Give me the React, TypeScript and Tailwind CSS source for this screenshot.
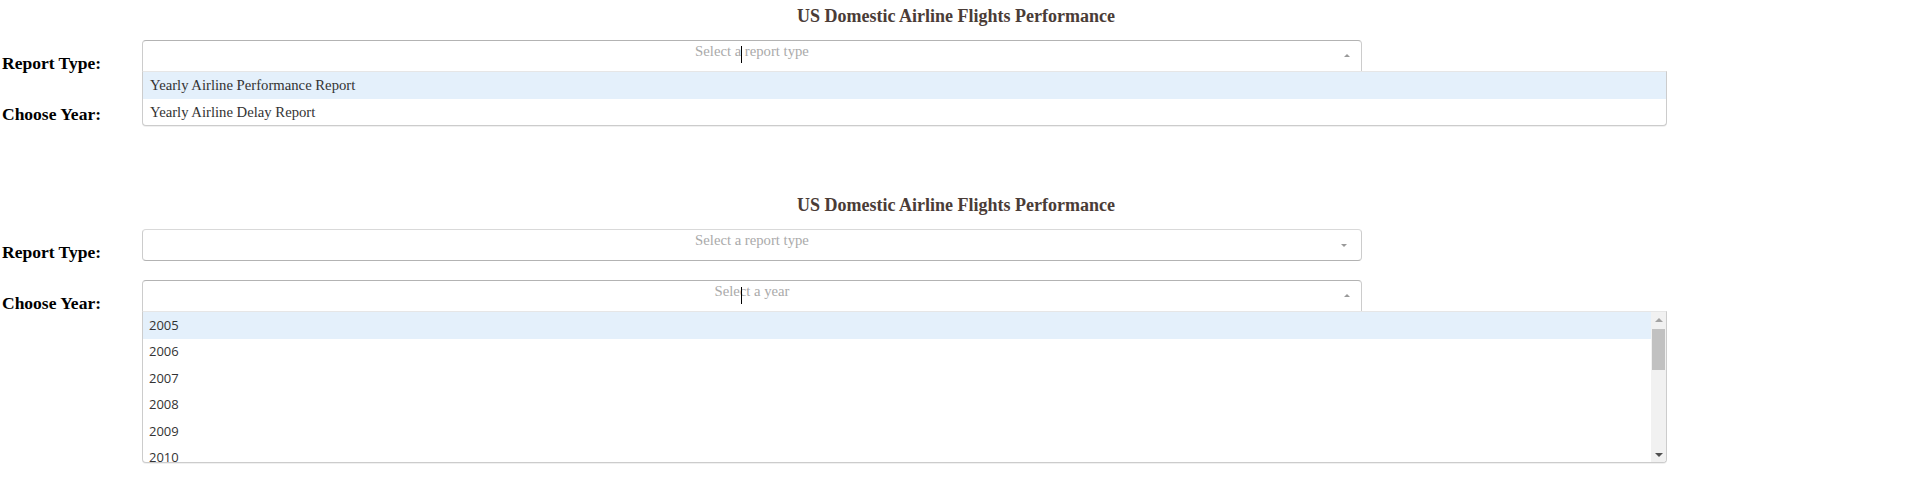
import React from 'react';

const reportTypes = ['Yearly Airline Performance Report', 'Yearly Airline Delay Report'];
const years = ['2005', '2006', '2007', '2008', '2009', '2010'];

function Caret({ up }: { up: boolean }) {
    return up ? (
        <span className="absolute right-[11px] top-[13px] border-x-[3px] border-x-transparent border-b-[3px] border-b-[#999]" />
    ) : (
        <span className="absolute right-[14px] top-[14px] border-x-[3px] border-x-transparent border-t-[3px] border-t-[#999]" />
    );
}

function Control({ placeholder, open, cursorTop }: { placeholder: string; open: boolean; cursorTop?: string }) {
    return (
        <div
            className={`relative h-[32px] w-[1220px] border bg-white ${
                open
                    ? 'rounded-t-[4px] border-[#ccc] border-t-[#b3b3b3] border-b-[#d9d9d9]'
                    : 'rounded-[4px] border-[#ccc] border-t-[#d9d9d9] border-b-[#b3b3b3]'
            }`}
        >
            <div className="pt-[1px] text-center text-[14.7px] leading-[18px] text-[#aaa]">{placeholder}</div>
            {open && <span className={`absolute left-[598px] ${cursorTop} h-[17px] w-px bg-black`} />}
            <Caret up={open} />
        </div>
    );
}

function Row({ label, children }: { label: string; children: React.ReactNode }) {
    return (
        <div className="flex h-[51px]">
            <div className="w-[142px] shrink-0 pl-[2px] pt-[13px] text-[17.5px] font-bold leading-[20px] text-black">{label}</div>
            <div className="relative">{children}</div>
        </div>
    );
}

function TypeMenu() {
    return (
        <div className="absolute left-0 top-[31px] z-10 w-[1525px] rounded-b-[4px] border border-[#ccc] border-t-[#e6e6e6] bg-white shadow-[0_1px_0_rgba(0,0,0,0.06)]">
            {reportTypes.map((t, i) => (
                <div
                    key={t}
                    className={`flex h-[26.5px] items-center pl-[7px] text-[14.7px] text-[#333] ${i === 0 ? 'bg-[#e4f0fb]' : ''}`}
                >
                    {t}
                </div>
            ))}
        </div>
    );
}

function YearMenu() {
    return (
        <div className="absolute left-0 top-[31px] z-10 flex h-[152px] w-[1525px] overflow-hidden rounded-b-[4px] border border-[#ccc] border-t-[#e6e6e6] bg-white shadow-[0_1px_0_rgba(0,0,0,0.06)]">
            <div className="flex-1 overflow-hidden">
                {years.map((y, i) => (
                    <div
                        key={y}
                        className={`flex h-[26.5px] shrink-0 items-center pl-[6px] font-['Open_Sans',sans-serif] text-[13px] text-[#333] ${i === 0 ? 'bg-[#e4f0fb]' : ''}`}
                    >
                        {y}
                    </div>
                ))}
            </div>
            {/* scrollbar */}
            <div className="flex w-[15px] flex-col bg-[#f1f1f1]">
                <div className="flex h-[15px] items-center justify-center">
                    <span className="border-x-[4px] border-x-transparent border-b-[4px] border-b-[#a3a3a3]" />
                </div>
                <div className="mx-[1px] mt-[2px] h-[41px] bg-[#c1c1c1]" />
                <div className="flex-1" />
                <div className="flex h-[15px] items-center justify-center">
                    <span className="border-x-[4px] border-x-transparent border-t-[4px] border-t-[#505050]" />
                </div>
            </div>
        </div>
    );
}

function Panel({ openMenu }: { openMenu: 'type' | 'year' }) {
    return (
        <div className="h-[189px]">
            <h1 className="h-[40px] pl-[7px] pt-[5px] text-center text-[18px] font-bold leading-[22px] text-[#4a3c37]">
                US Domestic Airline Flights Performance
            </h1>
            <Row label="Report Type:">
                <Control placeholder="Select a report type" open={openMenu === 'type'} cursorTop="top-[5px]" />
                {openMenu === 'type' && <TypeMenu />}
            </Row>
            <Row label="Choose Year:">
                <Control placeholder="Select a year" open={openMenu === 'year'} cursorTop="top-[6px]" />
                {openMenu === 'year' && <YearMenu />}
            </Row>
        </div>
    );
}

export default function App() {
    return (
        <div className="h-[487px] w-full bg-white font-['Liberation_Serif',serif]">
            <Panel openMenu="type" />
            <Panel openMenu="year" />
        </div>
    );
}
